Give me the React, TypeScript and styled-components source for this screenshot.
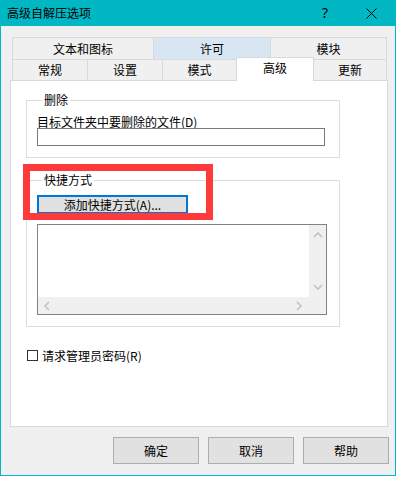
import React from "react";
import styled, {createGlobalStyle} from "styled-components";

const GlobalStyle = createGlobalStyle`
  html, body {
    margin: 0;
    padding: 0;
    background: #ffffff;
  }
  body {
    font-family: "Noto Sans CJK SC", "Noto Sans", sans-serif;
    font-size: 12px;
    color: #000;
  }
`

const Window = styled.div`
    width: 396px;
    height: 476px;
    box-sizing: border-box;
    border: 1px solid #00b7c3;
    border-top: none;
    background: #f0f0f0;
    display: flex;
    flex-direction: column;
`

const TitleBar = styled.div`
    height: 26px;
    margin: 0 -1px;
    background: #00b7c3;
    display: flex;
    align-items: center;
    padding-left: 7px;
    flex-shrink: 0;
`

const Title = styled.div`
    flex-grow: 1;
    font-size: 12px;
    line-height: 26px;
`

const Help = styled.div`
    width: 46px;
    text-align: center;
    font-size: 14px;
    line-height: 26px;
    font-family: "Noto Sans", sans-serif;
`

const Close = styled.div`
    width: 46px;
    height: 26px;
    display: flex;
    align-items: center;
    justify-content: center;
    margin-right: 2px;
`

const Body = styled.div`
    flex-grow: 1;
    display: flex;
    flex-direction: column;
    padding: 11px 6px 0 9px;
`

const TabRow = styled.div<{ $h: number }>`
    display: flex;
    height: ${p => p.$h}px;
    margin-left: 2px;
`

const Tab = styled.div<{ $w: number, $active?: boolean, $hover?: boolean }>`
    box-sizing: border-box;
    width: ${p => p.$w}px;
    height: 100%;
    border-top: 1px solid #d9d9d9;
    border-right: 1px solid #d9d9d9;
    background: ${p => p.$active ? '#ffffff' : p.$hover ? '#d8e6f3' : '#f0f0f0'};
    display: flex;
    align-items: center;
    justify-content: center;
    line-height: 14px;

    &:first-child {
        border-left: 1px solid #d9d9d9;
    }

    ${p => p.$active && `
        position: relative;
        z-index: 1;
        border-left: 1px solid #d9d9d9;
        margin-left: -1px;
        margin-top: -2px;
        height: 24px;
        align-self: flex-start;
        padding-bottom: 3px;
    `}
`

const Panel = styled.div`
    position: relative;
    box-sizing: border-box;
    width: 378px;
    height: 347px;
    border: 1px solid #d9d9d9;
    background: #ffffff;
    padding: 12px 0 0 15px;
    display: flex;
    flex-direction: column;
    align-items: flex-start;
`

const Group = styled.fieldset<{ $mt: number }>`
    box-sizing: border-box;
    width: 314px;
    margin: ${p => p.$mt}px 0 0;
    padding: 0 0 11px 10px;
    border: 1px solid #dcdcdc;
    min-width: 0;
    display: flex;
    flex-direction: column;
    align-items: flex-start;
`

const Legend = styled.legend`
    padding: 0 2px;
    margin-left: 5px;
    line-height: 14px;
    font-size: 12px;
`

const Label = styled.div`
    margin-top: 8px;
    line-height: 13px;
    white-space: nowrap;
`

const TextBox = styled.div`
    box-sizing: border-box;
    width: 288px;
    height: 18px;
    border: 1px solid #7a7a7a;
    background: #fff;
`

const AddButton = styled.button`
    box-sizing: border-box;
    margin: 8px 0 0 0;
    width: 151px;
    height: 19px;
    border: 2px solid #0078d7;
    background: #e1e1e1;
    font-family: inherit;
    font-size: 12px;
    line-height: 13px;
    padding: 0;
    color: #000;
`

const ListBox = styled.div`
    box-sizing: border-box;
    margin-top: 10px;
    width: 290px;
    height: 91px;
    border: 1px solid #828282;
    display: grid;
    grid-template-columns: 1fr 17px;
    grid-template-rows: 1fr 17px;
`

const ListArea = styled.div`
    background: #fff;
`

const ScrollBar = styled.div<{ $vertical?: boolean }>`
    background: #f0f0f0;
    display: flex;
    flex-direction: ${p => p.$vertical ? 'column' : 'row'};
    align-items: center;
    justify-content: space-between;
    padding: ${p => p.$vertical ? '6px 0 6px' : '0 6px 0 5px'};
`

const Corner = styled.div`
    background: #f0f0f0;
`

const CheckRow = styled.label`
    margin: 22px 0 0 1px;
    display: flex;
    align-items: center;
    gap: 4px;
    line-height: 13px;
`

const CheckBox = styled.span`
    box-sizing: border-box;
    width: 11px;
    height: 11px;
    border: 1px solid #333;
    background: #fff;
`

const ButtonRow = styled.div`
    display: flex;
    justify-content: flex-end;
    gap: 9px;
    margin-top: 10px;
`

const DialogButton = styled.button`
    box-sizing: border-box;
    width: 86px;
    height: 27px;
    border: 1px solid #adadad;
    background: #e1e1e1;
    font-family: inherit;
    font-size: 12px;
    color: #000;
    padding: 0;
`

const Highlight = styled.div`
    position: absolute;
    left: 12px;
    top: 83px;
    width: 190px;
    height: 56px;
    box-sizing: border-box;
    border: 7px solid #ff3a3a;
    pointer-events: none;
`

const Chevron = ({dir}: { dir: 'up' | 'down' | 'left' | 'right' }) => {
  const pts = {
    up: '1,6 5,2 9,6',
    down: '1,2 5,6 9,2',
    left: '6,1 2,5 6,9',
    right: '2,1 6,5 2,9',
  }[dir]
  const vert = dir === 'up' || dir === 'down'
  return (
    <svg width={vert ? 10 : 8} height={vert ? 8 : 10} viewBox={vert ? '0 0 10 8' : '0 0 8 10'}>
      <polyline points={pts} fill="none" stroke="#c2c2c2" strokeWidth="1.6"/>
    </svg>
  )
}

export default function App() {
  return (
    <>
      <GlobalStyle/>
      <Window>
        <TitleBar>
          <Title>高级自解压选项</Title>
          <Help>?</Help>
          <Close>
            <svg width="11" height="11" viewBox="0 0 11 11">
              <path d="M0.5 0.5 L10.5 10.5 M10.5 0.5 L0.5 10.5" stroke="#000" strokeWidth="1"/>
            </svg>
          </Close>
        </TitleBar>
        <Body>
          <TabRow $h={22}>
            <Tab $w={142}>文本和图标</Tab>
            <Tab $w={117} $hover>许可</Tab>
            <Tab $w={116}>模块</Tab>
          </TabRow>
          <TabRow $h={21}>
            <Tab $w={76}>常规</Tab>
            <Tab $w={75}>设置</Tab>
            <Tab $w={74}>模式</Tab>
            <Tab $w={78} $active>高级</Tab>
            <Tab $w={73}>更新</Tab>
          </TabRow>
          <Panel>
            <Group $mt={0}>
              <Legend>删除</Legend>
              <Label>目标文件夹中要删除的文件(D)</Label>
              <TextBox/>
            </Group>
            <Group $mt={15}>
              <Legend>快捷方式</Legend>
              <AddButton>添加快捷方式(A)...</AddButton>
              <ListBox>
                <ListArea/>
                <ScrollBar $vertical>
                  <Chevron dir="up"/>
                  <Chevron dir="down"/>
                </ScrollBar>
                <ScrollBar>
                  <Chevron dir="left"/>
                  <Chevron dir="right"/>
                </ScrollBar>
                <Corner/>
              </ListBox>
            </Group>
            <CheckRow>
              <CheckBox/>
              请求管理员密码(R)
            </CheckRow>
            <Highlight/>
          </Panel>
          <ButtonRow>
            <DialogButton>确定</DialogButton>
            <DialogButton>取消</DialogButton>
            <DialogButton>帮助</DialogButton>
          </ButtonRow>
        </Body>
      </Window>
    </>
  )
}
